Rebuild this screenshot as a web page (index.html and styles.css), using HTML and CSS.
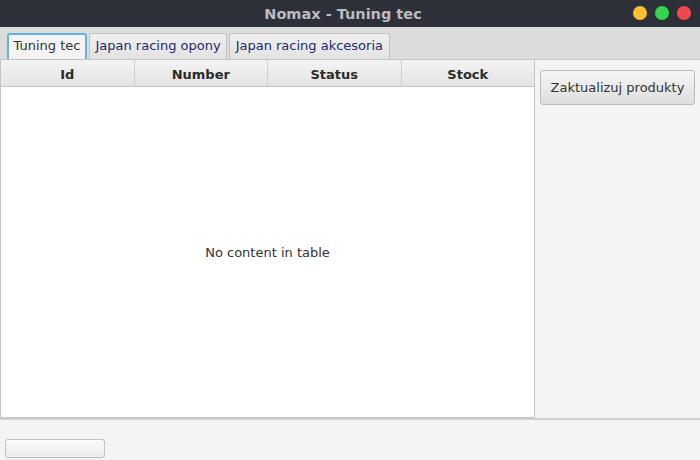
FILE: index.html
```html
<!DOCTYPE html>
<html>
<head>
  <title>Nomax - Tuning tec</title>
  <link rel="stylesheet" href="styles.css">
</head>
<body>
  <div class="titlebar">
    <span class="title">Nomax - Tuning tec</span>
    <div class="controls">
      <span class="dot min"></span>
      <span class="dot max"></span>
      <span class="dot close"></span>
    </div>
  </div>

  <div class="tabs">
    <div class="tab selected">Tuning tec</div>
    <div class="tab">Japan racing opony</div>
    <div class="tab">Japan racing akcesoria</div>
  </div>

  <div class="content">
    <div class="table">
      <div class="thead">
        <div class="th">Id</div>
        <div class="th">Number</div>
        <div class="th">Status</div>
        <div class="th">Stock</div>
      </div>
      <div class="tbody">No content in table</div>
    </div>
    <div class="side">
      <button class="btn">Zaktualizuj produkty</button>
    </div>
  </div>

  <div class="footer">
    <div class="progress"></div>
  </div>
</body>
</html>
```

FILE: styles.css
```css
body { margin: 0; width: 700px; height: 460px; overflow: hidden; font-family: "DejaVu Sans", sans-serif; font-size: 13px; color: #333; background: #f4f4f4; display: flex; flex-direction: column; }

.titlebar { height: 27px; background: #2e3039; display: flex; align-items: center; justify-content: center; padding-right: 14px; position: relative; flex-shrink: 0; }
.title { color: #b9bcc3; font-size: 14.5px; font-weight: bold; }
.controls { position: absolute; right: 9px; top: 6px; display: flex; gap: 8px; }
.dot { width: 14px; height: 14px; border-radius: 50%; }
.min { background: #fbc02d; }
.max { background: #33d64b; }
.close { background: #f2474f; }

.tabs { height: 33px; background: #dcdcdc; border-bottom: 1px solid #c4c4c4; display: flex; align-items: flex-end; padding-left: 7px; gap: 2px; box-sizing: border-box; flex-shrink: 0; }
.tab { height: 26px; padding: 0 5.5px; line-height: 24px; box-sizing: border-box; border: 1px solid #c2c2c2; border-bottom: none; border-radius: 3px 3px 0 0; background: linear-gradient(#f0f0f0, #e2e2e2); color: #1f2a6e; font-size: 13px; }
.tab.selected { background: #f4f4f4; border: 2px solid #5fb5e0; border-bottom: none; color: #333; line-height: 22px; padding: 0 4.5px; }

.content { display: flex; height: 358px; flex-shrink: 0; }
.table { width: 535px; box-sizing: border-box; border: 1px solid #c4c4c4; border-top: none; background: #fff; display: flex; flex-direction: column; }
.thead { height: 27px; display: flex; background: linear-gradient(#f3f3f3, #e4e4e4); border-bottom: 1px solid #c8c8c8; box-sizing: border-box; padding-top: 2px; }
.th { flex: 1; border-right: 1px solid #cfcfcf; margin-top: -2px; padding-top: 2px; display: flex; align-items: center; justify-content: center; font-weight: bold; font-size: 13px; color: #2b2b2b; }
.th:last-child { border-right: none; }
.tbody { flex: 1; display: flex; align-items: center; justify-content: center; font-size: 13px; color: #333; }

.side { flex: 1; padding: 10px 5px; }
.btn { width: 155px; height: 35px; font-family: "DejaVu Sans", sans-serif; font-size: 13px; color: #333; border: 1px solid #bcbcbc; border-radius: 3px; background: linear-gradient(#f6f6f6, #dedede); padding: 0; }

.footer { flex: 1; border-top: 2px solid #cfcfcf; padding: 19px 5px 0; }
.progress { width: 100px; height: 19px; box-sizing: border-box; border: 1px solid #c0c0c0; border-radius: 3px; background: linear-gradient(#fbfbfb, #ececec); }
```
